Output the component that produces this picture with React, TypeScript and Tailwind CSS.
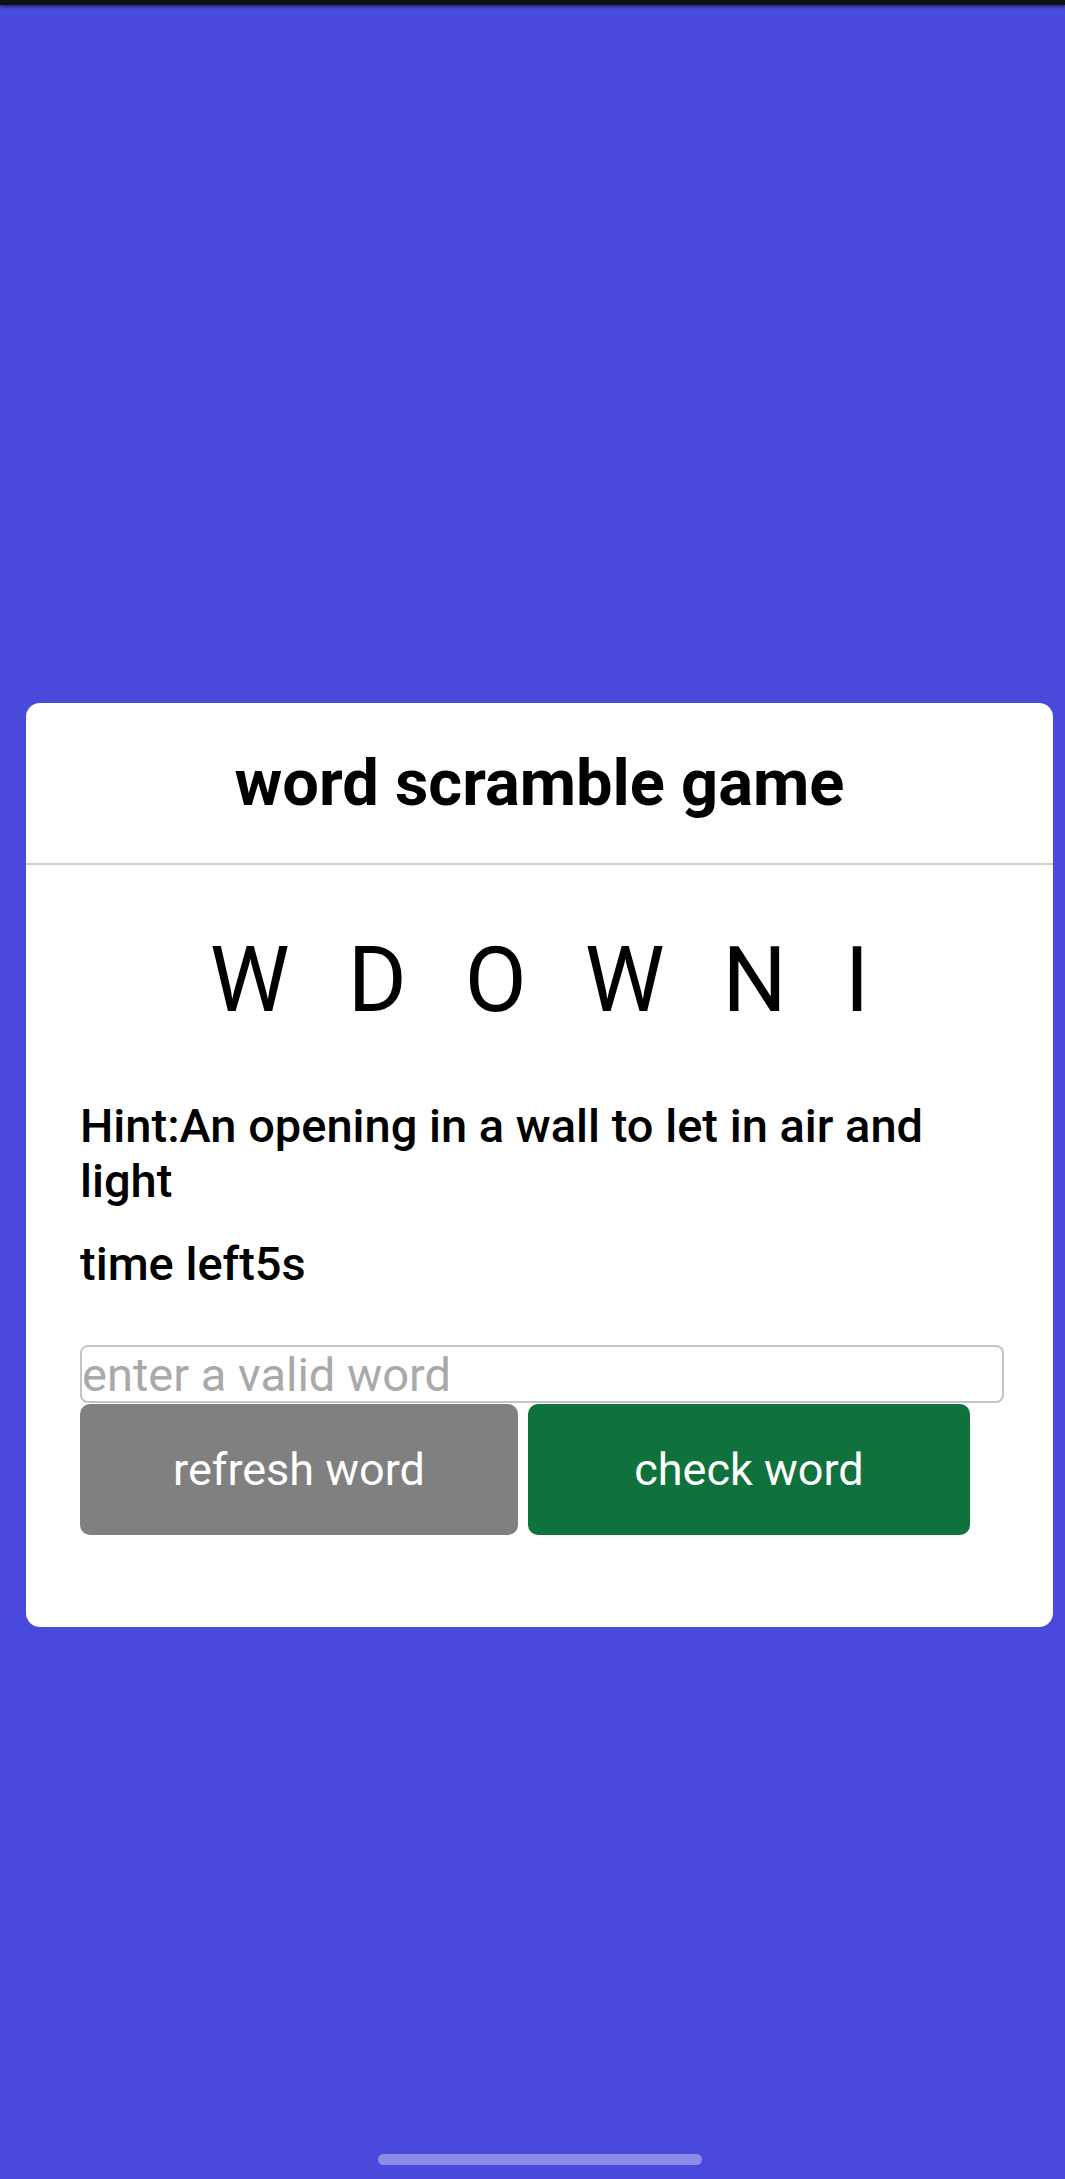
const letters = ['W', 'D', 'O', 'W', 'N', 'I']

export default function App() {
    return (
        <div className="relative min-h-[2179px] w-full bg-[#4949db] font-['Roboto',sans-serif] text-black">
            {/* status bar strip */}
            <div className="h-[5px] w-full bg-[#0d1114] shadow-[0_2px_3px_rgba(0,0,0,0.45)]"></div>

            <div className="ml-[26px] mt-[698px] w-[1027px] rounded-[14px] bg-white">
                <div className="border-b-2 border-[#d0d0d0] py-[43px] text-center">
                    <h1 className="text-[65px] font-bold leading-[74px]">word scramble game</h1>
                </div>

                <div className="px-[54px] pb-[92px]">
                    <div className="mt-[71px] flex justify-center gap-[58px] text-[90px] leading-[90px]">
                        {letters.map((l, i) => (
                            <span key={i}>{l}</span>
                        ))}
                    </div>

                    <p className="mt-[72px] pr-[40px] text-[47px] font-medium leading-[55px]">
                        Hint:An opening in a wall to let in air and light
                    </p>
                    <p className="mt-[28px] text-[47px] font-medium leading-[55px]">time left5s</p>

                    <input
                        type="text"
                        placeholder="enter a valid word"
                        className="mt-[54px] block h-[58px] w-[924px] rounded-[8px] border-2 border-[#c4c4c4] px-0 text-[47px] leading-[55px] placeholder:text-[#a9a9a9] outline-none"
                    />

                    <div className="mt-[1px] flex gap-[10px]">
                        <button className="h-[131px] w-[438px] rounded-[10px] bg-[#808080] text-[45px] leading-[53px] text-white">
                            refresh word
                        </button>
                        <button className="h-[131px] w-[442px] rounded-[10px] bg-[#0f723c] text-[45px] leading-[53px] text-white">
                            check word
                        </button>
                    </div>
                </div>
            </div>

            {/* gesture handle */}
            <div className="absolute bottom-[14px] left-[378px] h-[11px] w-[324px] rounded-full bg-[#8b8be8]"></div>
        </div>
    )
}
